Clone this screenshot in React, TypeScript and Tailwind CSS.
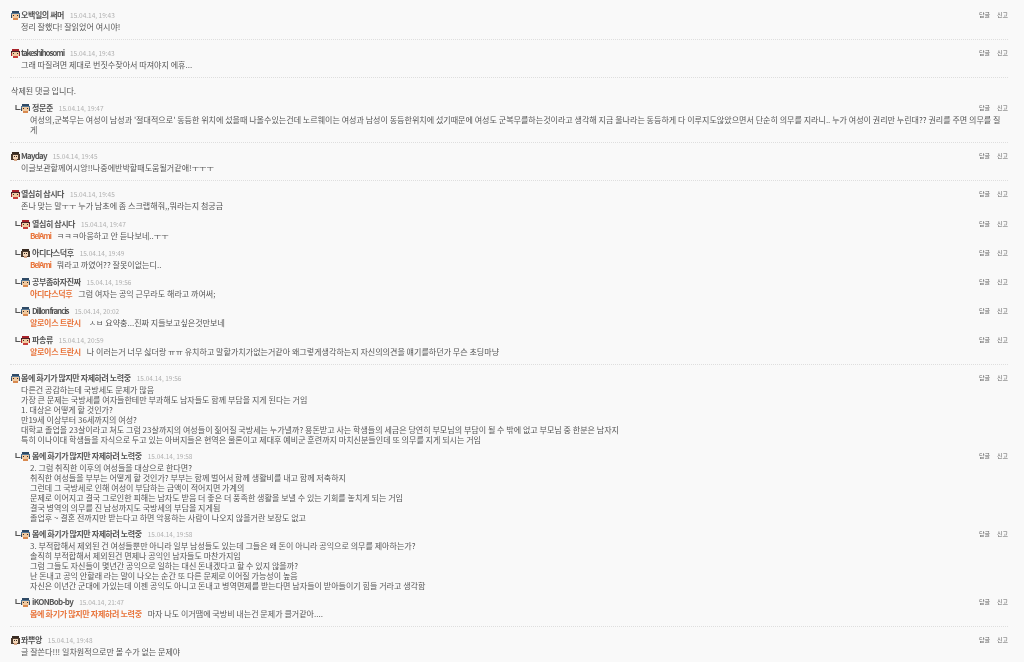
import React from "react";

type AvatarKind = "blue" | "red" | "girl";

type Reply = {
	name: string;
	time: string;
	avatar: AvatarKind;
	lines: string[];
	mention?: string;
	mentionTrack?: string;
	nameTrack?: string;
	top: string;
};

type Group = {
	name?: string;
	time?: string;
	avatar?: AvatarKind;
	nameTrack?: string;
	lines: string[];
	replies?: Reply[];
	last?: boolean;
};

const groups: Group[] = [
	{
		name: "오백일의 써머",
		time: "15.04.14, 19:43",
		avatar: "blue",
		lines: ["정리 잘했다! 잘읽었어 여시야!"],
	},
	{
		name: "takeshihosomi",
		time: "15.04.14, 19:43",
		avatar: "red",
		nameTrack: "tracking-[-1.15px]",
		lines: ["그래 따질려면 제대로 번짓수찾아서 따져야지 에휴..."],
	},
	{
		lines: [],
		replies: [
			{
				name: "정문준",
				time: "15.04.14, 19:47",
				avatar: "blue",
				top: "mt-[5px]",
				lines: [
					"여성의,군복무는 여성이 남성과 '절대적으로' 동등한 위치에 섰을때 나올수있는건데 노르웨이는 여성과 남성이 동등한위치에 섰기때문에 여성도 군복무를하는것이라고 생각해 지금 울나라는 동등하게 다 이루지도않았으면서 단순히 의무를 지라니.. 누가 여성이 권리만 누린대?? 권리를 주면 의무를 질",
					"게",
				],
			},
		],
	},
	{
		name: "Mayday",
		time: "15.04.14, 19:45",
		avatar: "girl",
		nameTrack: "tracking-[-0.8px]",
		lines: ["이글보관할께여시앙!!나중에반박할때도움될거같애!ㅜㅜㅜ"],
	},
	{
		name: "열심히 삽시다",
		time: "15.04.14, 19:45",
		avatar: "red",
		lines: ["존나 맞는 말ㅜㅜ 누가 남초에 좀 스크랩해줘,,뭐라는지 첨궁금"],
		replies: [
			{
				name: "열심히 삽시다",
				time: "15.04.14, 19:47",
				avatar: "red",
				top: "mt-[7px]",
				mention: "BelAmi",
				mentionTrack: "tracking-[-1.2px]",
				lines: ["ㅋㅋㅋ아웅하고 안 듣나보네..ㅜㅜ"],
			},
			{
				name: "아디다스덕후",
				time: "15.04.14, 19:49",
				avatar: "girl",
				top: "mt-[6px]",
				mention: "BelAmi",
				mentionTrack: "tracking-[-1.2px]",
				lines: ["뭐라고 까였어?? 잘못이없는디.."],
			},
			{
				name: "공부좀하자진짜",
				time: "15.04.14, 19:56",
				avatar: "blue",
				top: "mt-[6px]",
				mention: "아디다스덕후",
				lines: ["그럼 여자는 공익 근무라도 해라고 까여써;"],
			},
			{
				name: "Dillon francis",
				time: "15.04.14, 20:02",
				avatar: "blue",
				nameTrack: "tracking-[-1.1px]",
				top: "mt-[6px]",
				mention: "알로이스 트란시",
				lines: ["\u00a0ㅅㅂ 요약충...진짜 지들보고싶은것만보네"],
			},
			{
				name: "파송류",
				time: "15.04.14, 20:59",
				avatar: "red",
				top: "mt-[6px]",
				mention: "알로이스 트란시",
				lines: [
					"나 이러는거 너무 싫더랑 ㅠㅠ 유치하고 말할가치가없는거같아 왜그렇게생각하는지 자신의의견을 얘기를하던가 무슨 초딩마냥",
				],
			},
		],
	},
	{
		name: "몸에 화기가 많지만 자제하려 노력중",
		time: "15.04.14, 19:56",
		avatar: "blue",
		lines: [
			"다른건 공감하는데 국방세도 문제가 많음",
			"가장 큰 문제는 국방세를 여자들한테만 부과해도 남자들도 함께 부담을 지게 된다는 거임",
			"1. 대상은 어떻게 할 것인가?",
			"만19세 이상부터 36세까지의 여성?",
			"대학교 졸업을 23살이라고 쳐도 그럼 23살까지의 여성들이 짊어질 국방세는 누가낼까? 용돈받고 사는 학생들의 세금은 당연히 부모님의 부담이 될 수 밖에 없고 부모님 중 한분은 남자지",
			"특히 이나이대 학생들을 자식으로 두고 있는 아버지들은 현역은 물론이고 제대후 예비군 훈련까지 마치신분들인데 또 의무를 지게 되시는 거임",
		],
		replies: [
			{
				name: "몸에 화기가 많지만 자제하려 노력중",
				time: "15.04.14, 19:58",
				avatar: "blue",
				top: "mt-[5px]",
				lines: [
					"2. 그럼 취직한 이후의 여성들을 대상으로 한다면?",
					"취직한 여성들을 부부는 어떻게 할 것인가? 부부는 함께 벌어서 함께 생활비를 내고 함께 저축하지",
					"그런데 그 국방세로 인해 여성이 부담하는 금액이 적어지면 가계의",
					"문제로 이어지고 결국 그로인한 피해는 남자도 받음 더 좋은 더 풍족한 생활을 보낼 수 있는 기회를 놓치게 되는 거임",
					"결국 병역의 의무를 진 남성까지도 국방세의 부담을 지게됨",
					"졸업후 ~ 결혼 전까지만 받는다고 하면 악용하는 사람이 나오지 않을거란 보장도 없고",
				],
			},
			{
				name: "몸에 화기가 많지만 자제하려 노력중",
				time: "15.04.14, 19:58",
				avatar: "blue",
				top: "mt-[5px]",
				lines: [
					"3. 부적합해서 제외된 건 여성들뿐만 아니라 일부 남성들도 있는데 그들은 왜 돈이 아니라 공익으로 의무를 제아하는가?",
					"솔직히 부적합해서 제외된건 면제나 공익인 남자들도 마찬가지임",
					"그럼 그들도 자신들이 몇년간 공익으로 일하는 대신 돈내겠다고 할 수 있지 않을까?",
					"난 돈내고 공익 안할래 라는 말이 나오는 순간 또 다른 문제로 이어질 가능성이 높음",
					"자신은 이년간 군대에 가있는데 이젠 공익도 아니고 돈내고 병역면제를 받는다면 남자들이 받아들이기 힘들 거라고 생각함",
				],
			},
			{
				name: "iKONBob-by",
				time: "15.04.14, 21:47",
				avatar: "blue",
				nameTrack: "tracking-[-0.7px]",
				top: "mt-[5px]",
				mention: "몸에 화기가 많지만 자제하려 노력중",
				lines: ["마자 나도 이거땜에 국방비 내는건 문제가 클거같아...."],
			},
		],
	},
	{
		name: "퐈뿌앙",
		time: "15.04.14, 19:48",
		avatar: "girl",
		lines: ["글 잘쓴다!!! 일차원적으로만 볼 수가 없는 문제야"],
		last: true,
	},
];

// 像素头像
const Avatar = ({ kind }: { kind: AvatarKind }) => {
	if (kind === "girl") {
		return (
			<svg width="9" height="9" viewBox="0 0 9 9" className="shrink-0" shapeRendering="crispEdges">
				<rect x="1" y="0" width="7" height="8" fill="#3a2c22" />
				<rect x="0" y="2" width="9" height="6" fill="#4a3a2e" />
				<rect x="2" y="3" width="5" height="4" fill="#f3d6b8" />
				<rect x="3" y="4" width="1" height="1" fill="#3a2c22" />
				<rect x="5" y="4" width="1" height="1" fill="#3a2c22" />
				<rect x="3" y="7" width="3" height="2" fill="#d8a888" />
			</svg>
		);
	}
	const hair = kind === "red" ? "#a8232b" : "#2f4a66";
	const band = kind === "red" ? "#4a2028" : "#557795";
	const shirt = kind === "red" ? "#c8403c" : "#d98a50";
	return (
		<svg width="9" height="9" viewBox="0 0 9 9" className="shrink-0" shapeRendering="crispEdges">
			<rect x="1" y="0" width="7" height="3" fill={hair} />
			<rect x="0" y="2" width="9" height="2" fill={band} />
			<rect x="1" y="3" width="7" height="4" fill="#f0c9a0" />
			<rect x="2" y="4" width="1" height="1" fill="#3a2c22" />
			<rect x="6" y="4" width="1" height="1" fill="#3a2c22" />
			<rect x="0" y="4" width="1" height="3" fill={hair} />
			<rect x="8" y="4" width="1" height="3" fill={hair} />
			<rect x="2" y="7" width="5" height="2" fill={shirt} />
		</svg>
	);
};

const ReplyArrow = () => (
	<svg width="6" height="6" viewBox="0 0 6 6" className="shrink-0">
		<path d="M1 0V4.5H5.5" fill="none" stroke="#555" strokeWidth="1.2" />
	</svg>
);

const Actions = () => (
	<div className="ml-auto flex gap-[7px] text-[6px] text-[#666]">
		<span>답글</span>
		<span>신고</span>
	</div>
);

const Header = ({
	name,
	time,
	avatar,
	nameTrack,
	isReply,
}: {
	name: string;
	time: string;
	avatar: AvatarKind;
	nameTrack?: string;
	isReply?: boolean;
}) => (
	<div className="flex h-[12px] items-center leading-[12px]">
		<div className={isReply ? "" : "ml-[1px]"}>
			<Avatar kind={avatar} />
		</div>
		<span
			className={`${isReply ? "ml-[2px]" : "ml-[1px]"} text-[8px] font-bold text-[#555] ${nameTrack ?? "tracking-[-0.42px]"}`}
		>
			{name}
		</span>
		<span className="ml-[6px] text-[6.5px] text-[#b0b0b0]">{time}</span>
		<Actions />
	</div>
);

const App = () => {
	return (
		<div className="h-[662px] w-[1024px] overflow-hidden bg-[#f9f9f9] pl-[10px] pr-[16px] text-[8.05px] leading-[10px] text-[#555] blur-[0.25px] [font-family:'Noto_Sans_CJK_KR','Liberation_Sans',sans-serif]">
			{groups.map((g, i) => (
				<div
					key={i}
					className={`py-[7px] ${i === 0 ? "mt-[2px]" : ""} ${g.last ? "" : "border-b border-dotted border-[#dedede]"}`}
				>
					{g.name ? (
						<>
							<Header
								name={g.name}
								time={g.time ?? ""}
								avatar={g.avatar ?? "blue"}
								nameTrack={g.nameTrack}
							/>
							<div className="mt-[1px] pl-[11px] whitespace-nowrap">
								{g.lines.map((line, j) => (
									<div key={j}>{line}</div>
								))}
							</div>
						</>
					) : (
						<div className="h-[12px] pl-[1px] leading-[12px]">삭제된 댓글 입니다.</div>
					)}
					{g.replies?.map((r, j) => (
						<div key={j} className={`${r.top} pl-[5px]`}>
							<div className="flex h-[12px] items-center">
								<ReplyArrow />
								<div className="flex-1">
									<Header
										name={r.name}
										time={r.time}
										avatar={r.avatar}
										nameTrack={r.nameTrack}
										isReply
									/>
								</div>
							</div>
							<div className="mt-[1px] pl-[15px] whitespace-nowrap">
								{r.lines.map((line, k) => (
									<div key={k}>
										{k === 0 && r.mention ? (
											<span
												className={`mr-[6px] font-bold text-[#e8743b] ${r.mentionTrack ?? "tracking-[-0.35px]"}`}
											>
												{r.mention}
											</span>
										) : null}
										{line}
									</div>
								))}
							</div>
						</div>
					))}
				</div>
			))}
		</div>
	);
};

export default App;
